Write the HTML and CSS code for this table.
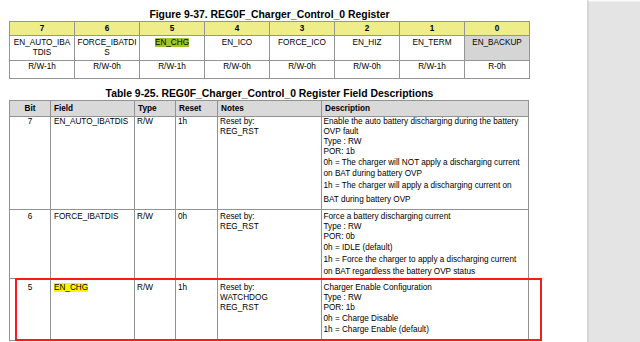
FILE: index.html
```html
<!DOCTYPE html>
<html>
<head>
<meta charset="utf-8">
<link rel="stylesheet" href="styles.css">
</head>
<body>
<div class="page">
  <main class="doc">
    <h2 class="caption fig">Figure 9-37. REG0F_Charger_Control_0 Register</h2>
    <div class="reg">
      <div class="rh">7</div><div class="rh">6</div><div class="rh">5</div><div class="rh">4</div>
      <div class="rh">3</div><div class="rh">2</div><div class="rh">1</div><div class="rh">0</div>
      <div class="rn">EN_AUTO_IBA<br>TDIS</div>
      <div class="rn">FORCE_IBATDI<br>S</div>
      <div class="rn"><span class="hl-green">EN_CHG</span></div>
      <div class="rn">EN_ICO</div>
      <div class="rn">FORCE_ICO</div>
      <div class="rn">EN_HIZ</div>
      <div class="rn">EN_TERM</div>
      <div class="rn ro">EN_BACKUP</div>
      <div class="ra">R/W-1h</div><div class="ra">R/W-0h</div><div class="ra">R/W-1h</div><div class="ra">R/W-0h</div>
      <div class="ra">R/W-0h</div><div class="ra">R/W-0h</div><div class="ra">R/W-1h</div><div class="ra">R-0h</div>
    </div>

    <h2 class="caption tbl">Table 9-25. REG0F_Charger_Control_0 Register Field Descriptions</h2>
    <div class="fields">
      <div class="th center">Bit</div><div class="th">Field</div><div class="th">Type</div>
      <div class="th">Reset</div><div class="th">Notes</div><div class="th">Description</div>

      <div class="td center r7">7</div>
      <div class="td fld r7">EN_AUTO_IBATDIS</div>
      <div class="td r7">R/W</div>
      <div class="td r7">1h</div>
      <div class="td r7"><span class="ln">Reset by:</span><span class="ln">REG_RST</span></div>
      <div class="td desc r7">
        <span class="ln">Enable the auto battery discharging during the battery</span>
        <span class="ln">OVP fault</span>
        <span class="ln">Type : RW</span>
        <span class="ln">POR: 1b</span>
        <span class="ln v">0h = The charger will NOT apply a discharging current</span>
        <span class="ln v">on BAT during battery OVP</span>
        <span class="ln v">1h = The charger will apply a discharging current on</span>
        <span class="ln v last">BAT during battery OVP</span>
      </div>

      <div class="td center r6">6</div>
      <div class="td fld r6">FORCE_IBATDIS</div>
      <div class="td r6">R/W</div>
      <div class="td r6">0h</div>
      <div class="td r6"><span class="ln">Reset by:</span><span class="ln">REG_RST</span></div>
      <div class="td desc r6">
        <span class="ln">Force a battery discharging current</span>
        <span class="ln">Type : RW</span>
        <span class="ln">POR: 0b</span>
        <span class="ln v">0h = IDLE (default)</span>
        <span class="ln v second">1h = Force the charger to apply a discharging current</span>
        <span class="ln v">on BAT regardless the battery OVP status</span>
      </div>

      <div class="td center r5">5</div>
      <div class="td fld r5"><span class="hl-yellow">EN_CHG</span></div>
      <div class="td r5">R/W</div>
      <div class="td r5">1h</div>
      <div class="td r5"><span class="ln">Reset by:</span><span class="ln">WATCHDOG</span><span class="ln">REG_RST</span></div>
      <div class="td desc r5">
        <span class="ln">Charger Enable Configuration</span>
        <span class="ln">Type : RW</span>
        <span class="ln">POR: 1b</span>
        <span class="ln v">0h = Charge Disable</span>
        <span class="ln v">1h = Charge Enable (default)</span>
      </div>
    </div>
    <div class="callout"></div>
  </main>
  <aside class="side"></aside>
</div>
</body>
</html>
```
FILE: styles.css
```css
* { box-sizing: border-box; }
html, body { margin: 0; padding: 0; background: #fff; }
body {
  font-family: "Liberation Sans", Arial, sans-serif;
  color: #000;
  width: 640px;
  height: 342px;
  overflow: hidden;
}
.page {
  display: flex;
  width: 640px;
  height: 342px;
}
.doc {
  position: relative;
  width: 587px;
  flex: none;
  padding-left: 9px;
}
.side {
  flex: 1;
  background: #e4e4e4;
  border-left: 2px solid #d6d6d6;
  border-top: 1px solid #fafafa;
  box-shadow: inset 0 1px 0 #efefef;
}
.caption {
  margin: 8px 0 0;
  width: 521px;
  text-align: center;
  font-size: 10.4px;
  line-height: 13px;
  font-weight: bold;
  color: #000;
}

/* register bit map */
.reg {
  display: grid;
  grid-template-columns: repeat(8, 64px);
  grid-template-rows: 13px 24px 17px;
  gap: 1px;
  padding: 1px;
  width: max-content;
  background: #959595;
  font-size: 8.2px;
}
.reg > div {
  background: #fff;
  text-align: center;
}
.reg .rh {
  background: #eeed8a;
  font-weight: bold;
  line-height: 13px;
}
.reg .rn {
  padding-top: 2px;
  line-height: 9.5px;
}
.reg .ro { background: #d5d5d5; }
.reg .ra {
  padding-top: 1px;
  line-height: 10px;
}
.hl-green { background: #a3c52a; }
.hl-yellow { background: #fbf500; }

/* field table */
.fields {
  display: grid;
  grid-template-columns: 40px 83px 40px 41px 103px 206px;
  grid-template-rows: 15px 92px 68px 61px;
  gap: 1px;
  padding: 1px;
  width: max-content;
  background: #929292;
  font-size: 8.2px;
}
.fields > div { background: #fff; }
.fields .th {
  background: #d9d9d9;
  font-weight: bold;
  line-height: 15px;
  padding-left: 3px;
}
.fields .td {
  padding-left: 2px;
  line-height: 10px;
}
.fields .center { text-align: center; padding-left: 0; }
.fields .fld { padding-left: 3px; }
.fields .desc { padding-left: 1.5px; }
.r7 { padding-top: 0; }
.r6 { padding-top: 1.5px; }
.r5 { padding-top: 4px; }
.ln { display: block; line-height: 10px; white-space: nowrap; }
.ln.v { line-height: 11.4px; }
.ln.second { margin-top: 1.5px; }
.ln.last { margin-top: 2.5px; }

.callout {
  position: absolute;
  left: 15px;
  top: 278px;
  width: 527px;
  height: 63px;
  border: 2px solid #ff1a1a;
}
```
